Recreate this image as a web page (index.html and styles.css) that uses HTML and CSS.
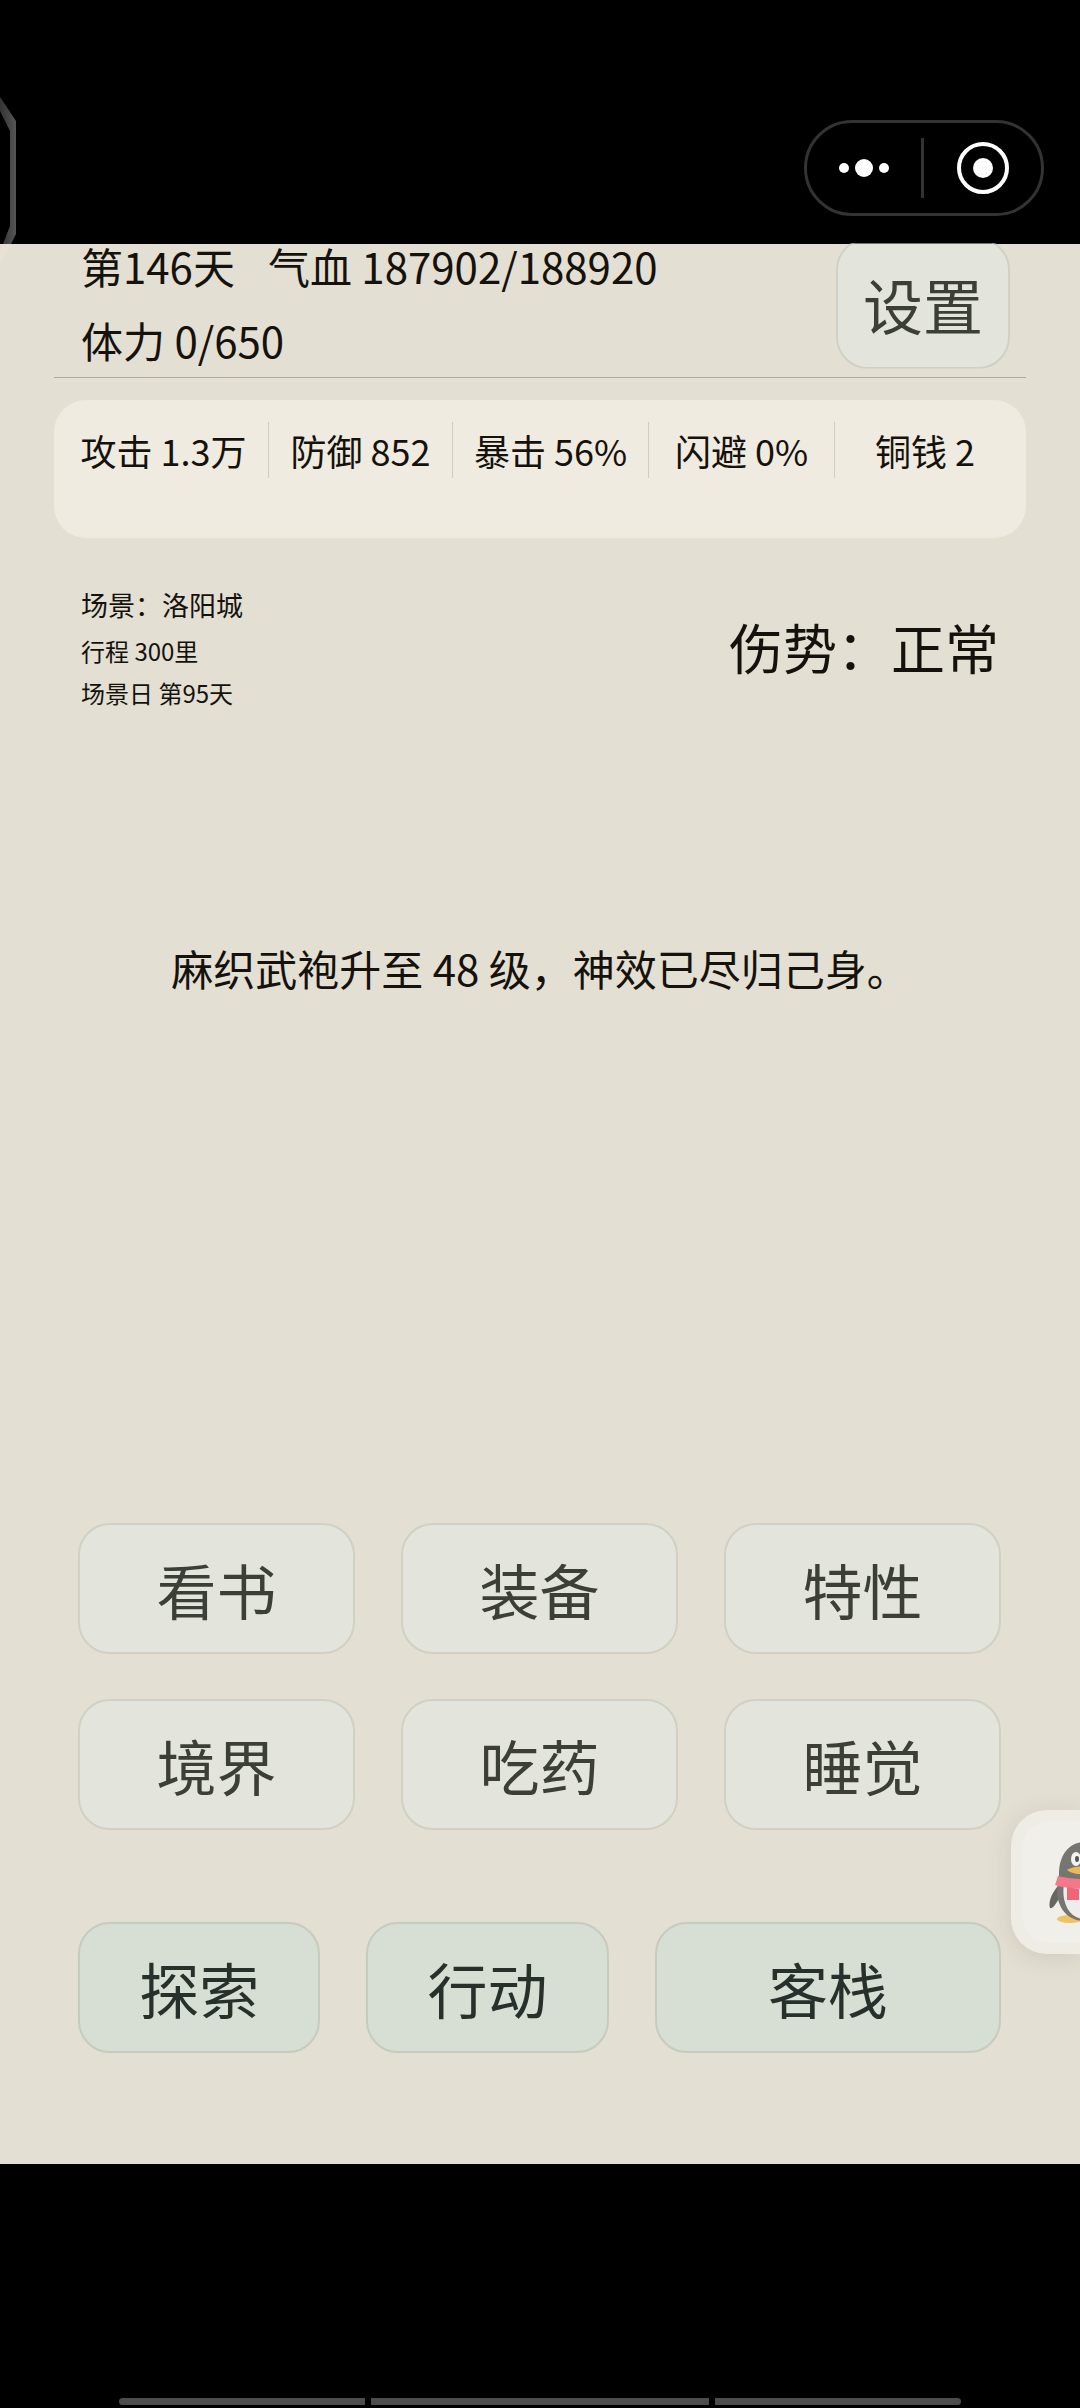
FILE: index.html
```
<!DOCTYPE html>
<html lang="zh-CN">

<head>
	<meta charset="utf-8">
	<meta name="viewport" content="width=device-width">
	<title>洛阳城</title>
	<link rel="stylesheet" href="styles.css">
</head>

<body>
	<header class="topbar">
		<svg class="edge-panel" width="18" height="180" viewBox="0 0 18 180" aria-hidden="true">
			<defs>
				<linearGradient id="edge" x1="0" y1="0" x2="1" y2="0">
					<stop offset="0" stop-color="#333"/>
					<stop offset="1" stop-color="#555"/>
				</linearGradient>
			</defs>
			<path d="M0 7L16 31V144L11 154H3L10 136V41L0 21Z" fill="url(#edge)"/>
			<path d="M11 154L0 174V158L3 154Z" fill="#ebe0d4"/>
		</svg>
		<div class="capsule">
			<button class="capsule-btn" aria-label="更多">
				<svg width="60" height="60" viewBox="0 0 60 60" fill="#fff">
					<circle cx="10" cy="30" r="5"/>
					<circle cx="30" cy="30" r="9"/>
					<circle cx="50" cy="30" r="5"/>
				</svg>
			</button>
			<button class="capsule-btn" aria-label="关闭">
				<svg width="60" height="60" viewBox="0 0 60 60">
					<circle cx="30" cy="30" r="24" fill="none" stroke="#fff" stroke-width="4"/>
					<circle cx="30" cy="30" r="10" fill="#fff"/>
				</svg>
			</button>
		</div>
	</header>

	<main class="game">
		<section class="status">
			<div class="status-text">
				<div class="status-line"><span>第146天</span><span>气血 187902/188920</span></div>
				<div class="status-line"><span>体力 0/650</span></div>
			</div>
			<button class="btn btn-settings">设置</button>
		</section>

		<ul class="stats">
			<li>攻击 1.3万</li>
			<li>防御 852</li>
			<li>暴击 56%</li>
			<li>闪避 0%</li>
			<li>铜钱 2</li>
		</ul>

		<section class="scene">
			<div class="scene-info">
				<p class="scene-name">场景：洛阳城</p>
				<p>行程 300里</p>
				<p>场景日 第95天</p>
			</div>
			<p class="injury">伤势：正常</p>
		</section>

		<p class="message">麻织武袍升至 48 级，神效已尽归己身。</p>

		<nav class="actions">
			<div class="action-grid">
				<button class="btn">看书</button>
				<button class="btn">装备</button>
				<button class="btn">特性</button>
				<button class="btn">境界</button>
				<button class="btn">吃药</button>
				<button class="btn">睡觉</button>
			</div>
			<div class="action-main">
				<button class="btn btn-primary">探索</button>
				<button class="btn btn-primary">行动</button>
				<button class="btn btn-primary">客栈</button>
			</div>
		</nav>
	</main>

	<!-- floating QQ shortcut, half off the right edge -->
	<button class="qq-float" aria-label="QQ">
		<span class="qq-inner">
			<svg width="72" height="84" viewBox="0 0 72 84" aria-hidden="true">
				<ellipse cx="21" cy="77" rx="13" ry="4" fill="#efc264"/>
				<ellipse cx="51" cy="77" rx="13" ry="4" fill="#efc264"/>
				<path d="M10 43C3 50 -1 60 1 66C4 67 7 62 10 56Z" fill="#666663"/>
				<path d="M62 43C69 50 73 60 71 66C68 67 65 62 62 56Z" fill="#666663"/>
				<path d="M36 0C20 0 10 13 10 32L8 50C9 68 20 79 36 79S63 68 64 50L62 32C62 13 52 0 36 0Z" fill="#757572"/>
				<path d="M15 42C12 60 20 77 36 77S60 60 57 42Z" fill="#eeedeb"/>
				<ellipse cx="27" cy="17" rx="5" ry="7" fill="#f5f4f1"/>
				<ellipse cx="45" cy="17" rx="5" ry="7" fill="#f5f4f1"/>
				<ellipse cx="28" cy="17" rx="2" ry="3" fill="#555"/>
				<ellipse cx="44" cy="17" rx="2" ry="3" fill="#555"/>
				<path d="M18 28C24 23 48 23 54 28C48 34 24 34 18 28Z" fill="#e9bb58"/>
				<path d="M9 34C24 38 48 38 63 34L66 43C52 48 20 48 6 43Z" fill="#f3788a"/>
				<path d="M18 45L30 47V58H18Z" fill="#ef6679"/>
			</svg>
		</span>
	</button>

	<footer class="bottombar">
		<div class="nav-hint"><i></i><i></i><i></i></div>
	</footer>
</body>

</html>
```

FILE: styles.css
```
* {
	box-sizing: border-box;
}

body {
	position: relative;
	display: flex;
	flex-direction: column;
	min-height: 100vh;
	margin: 0;
	overflow-x: hidden;
	font-family: "Noto Sans CJK SC", sans-serif;
	font-size: 42px;
	color: #15120d;
	background: #000;
}

p,
ul {
	margin: 0;
	padding: 0;
}

button {
	padding: 0;
	border: none;
	background: none;
	font-family: inherit;
	color: inherit;
}

svg {
	display: block;
}

/* mini program title bar */
.topbar {
	display: flex;
	justify-content: flex-end;
	align-items: flex-start;
	height: 244px;
	padding: 120px 36px 0;
}

.edge-panel {
	position: absolute;
	left: 0;
	top: 90px;
	z-index: 1;
}

.capsule {
	display: grid;
	grid-template-columns: 117fr 117fr;
	align-items: center;
	width: 240px;
	height: 96px;
	border: 3px solid #333;
	border-radius: 48px;
}

.capsule-btn {
	display: flex;
	justify-content: center;
}

.capsule-btn:first-child {
	border-right: 3px solid #333;
}

.game {
	display: flex;
	flex: 1;
	flex-direction: column;
	padding: 0 54px 111px;
	background: #e3dfd3;
}

/* the first line slides up under the title bar */
.status {
	display: flex;
	justify-content: space-between;
	align-items: center;
	margin-top: -15px;
	padding: 0 16px 0 27px;
	border-bottom: 1px solid #aeab9f;
}

.status-line {
	display: flex;
	gap: 33px;
	line-height: 74px;
}

.btn {
	height: 131px;
	border: 2px solid #d0d0c4;
	border-radius: 32px;
	background: #e3e5dc;
	font-size: 60px;
	color: #3b3f38;
}

.btn-settings {
	width: 174px;
	clip-path: inset(6px 0 0);
}

.stats {
	display: grid;
	grid-template-columns: 209fr 184fr 196fr 186fr 181fr;
	margin-top: 22px;
	padding: 22px 11px 60px 5px;
	border-radius: 32px;
	background: #efebe0;
	font-size: 36px;
	line-height: 56px;
	list-style: none;
	text-align: center;
}

.stats li + li {
	border-left: 1px solid #cfccc1;
}

.scene {
	display: flex;
	justify-content: space-between;
	align-items: center;
	margin-top: 42px;
	padding: 0 27px;
	font-size: 24px;
	line-height: 42px;
}

.scene-name {
	font-size: 27px;
	line-height: 50px;
}

.injury {
	font-size: 54px;
}

.message {
	margin-top: 224px;
	line-height: 60px;
	text-align: center;
}

.actions {
	margin-top: auto;
	padding: 0 25px 0 24px;
}

.action-grid {
	display: grid;
	grid-template-columns: repeat(3, 1fr);
	gap: 45px 46px;
}

.action-main {
	display: grid;
	grid-template-columns: 7fr 7fr 10fr;
	gap: 46px;
	margin-top: 92px;
}

.btn-primary {
	border-color: #c6cbbf;
	background: #d7ded3;
	color: #28302c;
}

.qq-float {
	position: absolute;
	top: 1810px;
	right: 0;
	width: 69px;
	height: 144px;
	padding: 11px 0 11px 11px;
	overflow: hidden;
	border-radius: 36px 0 0 36px;
	background: #eeece5;
	box-shadow: 0 4px 24px rgba(90, 80, 50, 0.14);
}

.qq-inner {
	display: block;
	height: 122px;
	padding: 21px 0 0 27px;
	border-radius: 28px 0 0 28px;
	background: #f0efea;
}

/* system gesture bar */
.bottombar {
	display: flex;
	justify-content: center;
	align-items: flex-end;
	height: 244px;
	padding-bottom: 3px;
}

.nav-hint {
	display: grid;
	grid-template-columns: 245fr 338fr 245fr;
	gap: 6px;
	width: 78%;
	height: 7px;
	overflow: hidden;
	border-radius: 4px;
}

.nav-hint i {
	background: #4d4d4d;
}
```
